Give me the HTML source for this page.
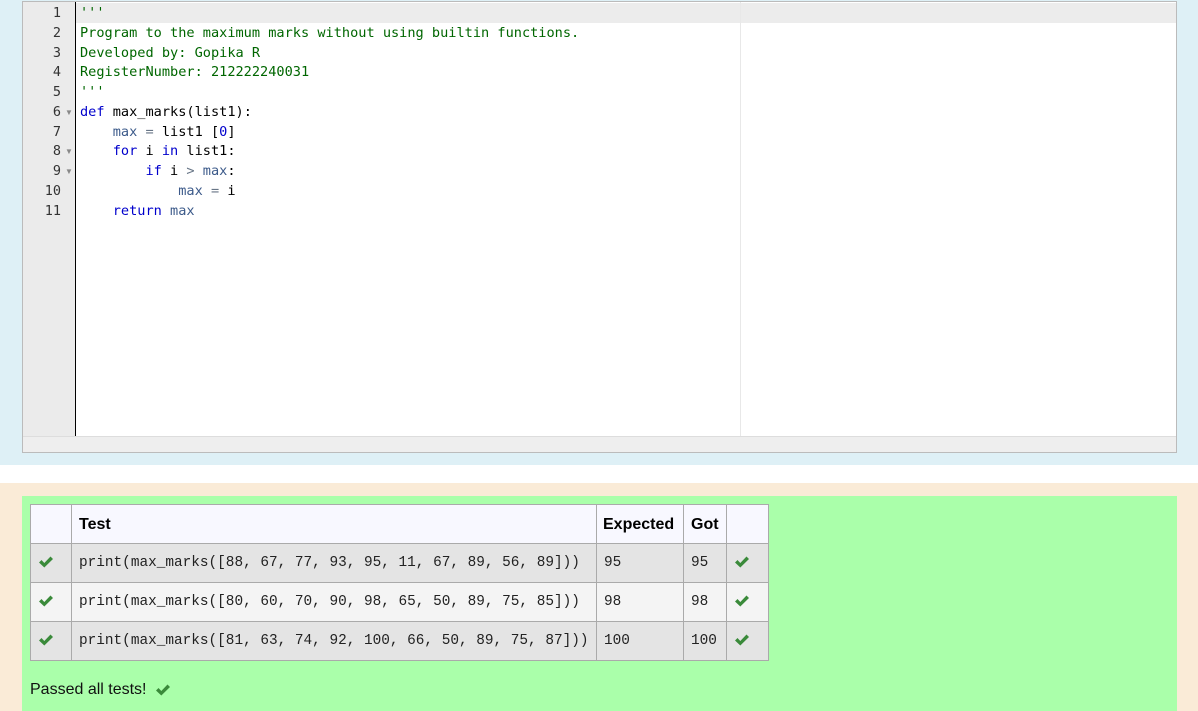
<!DOCTYPE html>
<html><head><style>
body{margin:0;width:1198px;height:711px;overflow:hidden;background:#fff;font-family:"Liberation Sans",sans-serif;}
.top{position:absolute;left:0;top:0;width:1198px;height:465px;background:#def0f6;}
.ed{position:absolute;left:22px;top:1px;width:1153px;height:450px;border:1px solid #bbb;background:#fff;overflow:hidden;}
.gut{position:absolute;left:0;top:0;width:52px;height:434px;background:#ebebeb;border-right:1px solid #000;}
.bar{position:absolute;left:0;top:434px;width:1153px;height:16px;background:#eee;border-top:1px solid #ddd;}
.pm{position:absolute;left:717px;top:0;width:1px;height:434px;background:#e8e8e8;}
.hl{position:absolute;left:0;top:1px;width:1153px;height:20px;background:#ececec;}
.ln{position:absolute;left:0;width:38px;text-align:right;font:13.5px "DejaVu Sans Mono",monospace;color:#333;}
.fold{position:absolute;left:42px;font-size:8px;color:#888;}
.code{position:absolute;left:57px;font:13.6px "DejaVu Sans Mono",monospace;white-space:pre;color:#000;}
.c{color:#060}.k{color:#00c}.v{color:#3c5a8a}.o{color:#687687}.n{color:#00c}
.bot{position:absolute;left:0;top:483px;width:1198px;height:228px;background:#faebd7;}
.gr{position:absolute;left:22px;top:496px;width:1155px;height:215px;background:#aaffaa;}
table{position:absolute;left:30px;top:504px;border-collapse:collapse;}
td,th{border:1px solid #aaa;padding:0 7px;height:38px;text-align:left;box-sizing:border-box;}
th{background:#f8f8ff;font-size:16px;padding-top:2px;height:39px;}
td{font:14.4px "Liberation Mono",monospace;color:#222;height:39px;}
tr.a td{background:#e4e4e4}tr.b td{background:#f4f4f4}
.pass{position:absolute;left:30px;top:681px;font-size:16px;color:#111;}
svg.ck{display:inline-block;vertical-align:middle}
</style></head><body>
<svg width="0" height="0" style="position:absolute"><defs><symbol id="ck" viewBox="0 0 16 14"><path d="M1 7.5 L3.5 5 L6.3 8 L12.5 1.5 L15 4 L6.3 12.5 Z" fill="#3a8a3a"/></symbol></defs></svg>
<div class="top"><div class="ed">
<div class="hl"></div>
<div class="gut"></div>
<div class="pm"></div>
<div class="ln" style="top:3px">1</div><div class="ln" style="top:23px">2</div><div class="ln" style="top:43px">3</div><div class="ln" style="top:62px">4</div><div class="ln" style="top:82px">5</div><div class="ln" style="top:102px">6</div><div class="ln" style="top:122px">7</div><div class="ln" style="top:141px">8</div><div class="ln" style="top:161px">9</div><div class="ln" style="top:181px">10</div><div class="ln" style="top:201px">11</div>
<div class="fold" style="top:106px">▼</div><div class="fold" style="top:145px">▼</div><div class="fold" style="top:165px">▼</div>
<div class="code" style="top:2px;line-height:19.75px"><span class="c">'''
Program to the maximum marks without using builtin functions.
Developed by: Gopika R
RegisterNumber: 212222240031
'''</span>
<span class="k">def</span> max_marks(list1):
    <span class="v">max</span> <span class="o">=</span> list1 [<span class="n">0</span>]
    <span class="k">for</span> i <span class="k">in</span> list1:
        <span class="k">if</span> i <span class="o">&gt;</span> <span class="v">max</span>:
            <span class="v">max</span> <span class="o">=</span> i
    <span class="k">return</span> <span class="v">max</span></div>
<div class="bar"></div>
</div></div>
<div class="bot"></div>
<div class="gr"></div>
<table>
<tr><th style="width:41px"></th><th style="width:525px">Test</th><th style="width:87px;padding:2px 6px 0">Expected</th><th style="width:42px">Got</th><th style="width:42px"></th></tr>
<tr class="a"><td><svg class="ck" width="16" height="14"><use href="#ck"/></svg></td><td>print(max_marks([88, 67, 77, 93, 95, 11, 67, 89, 56, 89]))</td><td>95</td><td>95</td><td><svg class="ck" width="16" height="14"><use href="#ck"/></svg></td></tr>
<tr class="b"><td><svg class="ck" width="16" height="14"><use href="#ck"/></svg></td><td>print(max_marks([80, 60, 70, 90, 98, 65, 50, 89, 75, 85]))</td><td>98</td><td>98</td><td><svg class="ck" width="16" height="14"><use href="#ck"/></svg></td></tr>
<tr class="a"><td><svg class="ck" width="16" height="14"><use href="#ck"/></svg></td><td>print(max_marks([81, 63, 74, 92, 100, 66, 50, 89, 75, 87]))</td><td>100</td><td>100</td><td><svg class="ck" width="16" height="14"><use href="#ck"/></svg></td></tr>
</table>
<div class="pass">Passed all tests! &nbsp;<svg class="ck" width="16" height="14"><use href="#ck"/></svg></div>
</body></html>
